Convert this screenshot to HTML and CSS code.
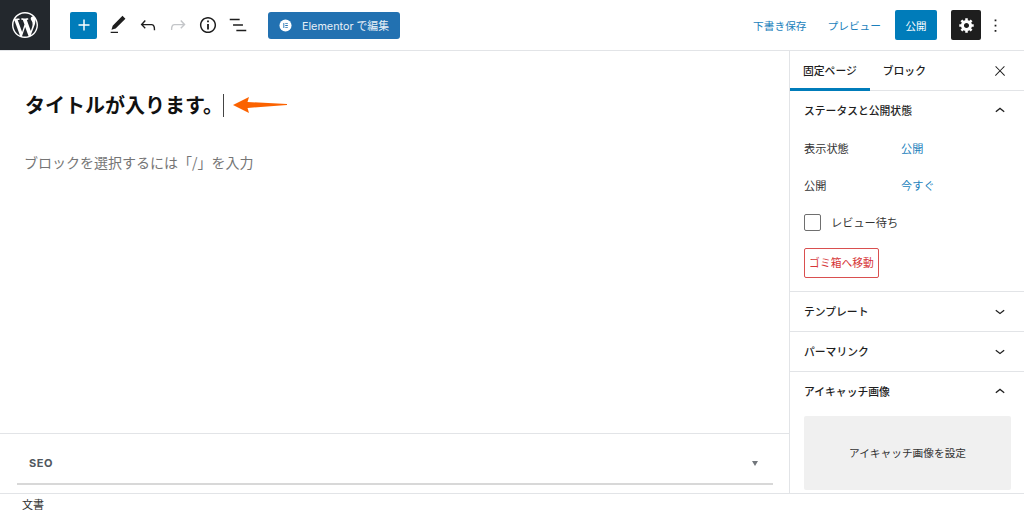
FILE: index.html
```html
<!DOCTYPE html>
<html lang="ja">
<head>
<meta charset="utf-8">
<title>固定ページを編集</title>
<link rel="stylesheet" href="styles.css">
</head>
<body>
<header class="topbar">
  <div class="wp-logo">
    <svg class="wp-svg" viewBox="0 0 20 20"><path d="M20 10c0-5.51-4.49-10-10-10C4.48 0 0 4.49 0 10c0 5.52 4.48 10 10 10 5.51 0 10-4.48 10-10zM7.78 15.37L4.37 6.22c.55-.02 1.17-.08 1.17-.08.5-.06.44-1.13-.06-1.11 0 0-1.45.11-2.37.11-.18 0-.37 0-.58-.01C4.12 2.69 6.87 1.11 10 1.11c2.33 0 4.45.87 6.05 2.34-.68-.11-1.65.39-1.65 1.58 0 .74.45 1.36.9 2.1.35.61.55 1.36.55 2.46 0 1.49-1.4 5-1.4 5l-3.03-8.37c.54-.02.82-.17.82-.17.5-.05.44-1.25-.06-1.22 0 0-1.44.12-2.38.12-.87 0-2.33-.12-2.33-.12-.5-.03-.56 1.2-.06 1.22l.92.08 1.26 3.41zM17.41 10c.24-.64.74-1.87.43-4.25.7 1.29 1.05 2.71 1.05 4.25 0 3.29-1.73 6.24-4.4 7.78.97-2.59 1.94-5.2 2.92-7.78zM6.1 18.09C3.12 16.65 1.11 13.53 1.11 10c0-1.3.23-2.48.72-3.59C3.25 10.3 4.67 14.2 6.1 18.09zm4.03-6.63l2.58 6.98c-.86.29-1.76.45-2.71.45-.79 0-1.57-.11-2.29-.33.81-2.38 1.62-4.74 2.42-7.1z"/></svg>
  </div>
  <div class="tools">
    <button class="add-btn"><svg class="ico" viewBox="0 0 24 24"><path d="M18 11.2h-5.2V6h-1.6v5.2H6v1.6h5.2V18h1.6v-5.2H18z"/></svg></button>
    <span class="tool"><svg class="ico" viewBox="0 0 24 24"><path d="M20.1 5.1L16.9 2 6.2 12.7l-1.3 4.4 4.5-1.3L20.1 5.1zM4 20.8h8v-1.5H4v1.5z"/></svg></span>
    <span class="tool"><svg class="ico" viewBox="0 0 24 24"><path d="M18.3 11.7c-.6-.6-1.4-.9-2.3-.9H6.7l2.9-3.3-1.1-1-4.5 5L8.5 16l1-1-2.7-2.7H16c.5 0 .9.2 1.3.5 1 1 1 3.4 1 4.5v.3h1.5v-.2c0-1.5 0-4.3-1.5-5.7z"/></svg></span>
    <span class="tool tool-off"><svg class="ico" viewBox="0 0 24 24"><path d="M15.6 6.5l-1.1 1 2.9 3.3H8c-.9 0-1.7.3-2.3.9-1.4 1.5-1.4 4.2-1.4 5.6v.2h1.5v-.3c0-1.1 0-3.5 1-4.5.3-.3.7-.5 1.3-.5h9.2L14.5 15l1.1 1.1 4.6-4.6-4.6-5z"/></svg></span>
    <span class="tool"><svg class="ico" viewBox="0 0 24 24"><path d="M12 3.2c-4.8 0-8.8 3.9-8.8 8.8 0 4.8 3.9 8.8 8.8 8.8 4.8 0 8.8-3.9 8.8-8.8 0-4.8-4-8.8-8.8-8.8zm0 16c-4 0-7.2-3.3-7.2-7.2C4.8 8 8 4.8 12 4.8s7.2 3.3 7.2 7.2c0 4-3.2 7.2-7.2 7.2zM11 17h2v-6h-2v6zm0-8h2V7h-2v2z"/></svg></span>
    <span class="tool"><svg class="ico" viewBox="0 0 24 24"><path d="M13.8 5.2H3v1.5h10.8V5.2zm-3.6 12v1.5H21v-1.5H10.2zm7.2-6H6.6v1.5h10.8v-1.5z"/></svg></span>
    <button class="elementor-btn">
      <svg class="el-ico" viewBox="0 0 14 14"><circle cx="7" cy="7" r="6.5" fill="#fff"/><path fill="#2271b1" d="M4.7 4.2h1v5.6h-1zM6.7 4.2h2.8v1H6.7zM6.7 6.5h2.8v1H6.7zM6.7 8.8h2.8v1H6.7z"/></svg>
      Elementor で編集
    </button>
  </div>
  <div class="actions">
    <a class="link draft">下書き保存</a>
    <a class="link preview">プレビュー</a>
    <button class="publish">公開</button>
    <button class="settings"><svg class="cog" viewBox="0 0 20 20"><path d="M18 12h-2.18c-.17.7-.44 1.35-.81 1.93l1.54 1.54-2.1 2.1-1.54-1.54c-.58.36-1.23.63-1.91.79V19H8v-2.18c-.68-.16-1.33-.43-1.91-.79l-1.54 1.54-2.12-2.12 1.54-1.54c-.36-.58-.63-1.23-.79-1.91H1V9.03h2.17c.16-.7.44-1.35.8-1.94L2.43 5.55l2.1-2.1 1.54 1.54c.58-.37 1.24-.64 1.93-.81V2h3v2.18c.68.16 1.33.43 1.91.79l1.54-1.54 2.12 2.12-1.54 1.54c.36.59.64 1.24.8 1.94H18V12zm-8.5 1.5c1.66 0 3-1.34 3-3s-1.34-3-3-3-3 1.34-3 3 1.34 3 3 3z" transform="translate(.5 -.5)"/></svg></button>
    <span class="more"><svg class="ico" viewBox="0 0 24 24"><path d="M13 19h-2v-2h2v2zm0-6h-2v-2h2v2zm0-6h-2V5h2v2z"/></svg></span>
  </div>
</header>

<div class="workspace">
  <main class="editor">
    <div class="canvas">
      <div class="title-row">
        <h1 class="title">タイトルが入ります。</h1>
        <span class="caret"></span>
        <svg class="arrow" viewBox="0 0 54 16"><path d="M0 8L16 0L14.500 5L54 7L54 8L14.500 11L16 16z"/></svg>
      </div>
      <p class="placeholder">ブロックを選択するには「/」を入力</p>
    </div>
    <section class="metabox">
      <div class="metabox-inner">
        <span class="seo">SEO</span>
        <span class="tri"></span>
      </div>
    </section>
  </main>

  <aside class="sidebar">
    <div class="tabs">
      <span class="tab tab-on">固定ページ</span>
      <span class="tab">ブロック</span>
      <svg class="ico close" viewBox="0 0 24 24"><path d="M13 11.800l6.100-6.300-1-1-6.100 6.200-6.100-6.200-1 1 6.100 6.300-6.500 6.700 1 1 6.500-6.600 6.500 6.600 1-1z"/></svg>
    </div>

    <section class="panel panel-open">
      <div class="panel-head">
        <span>ステータスと公開状態</span>
        <svg class="chev" viewBox="0 0 24 24"><path d="M6.500 13.400L12 9l5.500 4.400-.9 1.200L12 11l-4.500 3.600z"/></svg>
      </div>
      <div class="status-row"><span class="status-label">表示状態</span><a class="status-value">公開</a></div>
      <div class="status-row"><span class="status-label">公開</span><a class="status-value">今すぐ</a></div>
      <label class="check-row"><span class="check"></span><span class="check-text">レビュー待ち</span></label>
      <button class="trash">ゴミ箱へ移動</button>
    </section>

    <section class="panel">
      <div class="panel-head">
        <span>テンプレート</span>
        <svg class="chev" viewBox="0 0 24 24"><path d="M17.500 11.600L12 16l-5.500-4.400.9-1.200L12 14l4.500-3.600z"/></svg>
      </div>
    </section>
    <section class="panel">
      <div class="panel-head">
        <span>パーマリンク</span>
        <svg class="chev" viewBox="0 0 24 24"><path d="M17.500 11.600L12 16l-5.500-4.400.9-1.200L12 14l4.500-3.600z"/></svg>
      </div>
    </section>
    <section class="panel panel-last">
      <div class="panel-head">
        <span>アイキャッチ画像</span>
        <svg class="chev" viewBox="0 0 24 24"><path d="M6.500 13.400L12 9l5.500 4.400-.9 1.200L12 11l-4.500 3.600z"/></svg>
      </div>
      <div class="thumb">アイキャッチ画像を設定</div>
    </section>
  </aside>
</div>

<footer class="footer">文書</footer>
</body>
</html>
```

FILE: styles.css
```css
* { box-sizing: border-box; }
html, body { height: 100%; }
body {
  margin: 0;
  height: 514px;
  overflow: hidden;
  display: flex;
  flex-direction: column;
  background: #fff;
  color: #1e1e1e;
  font-family: "Noto Sans CJK JP", Inter, sans-serif;
  font-size: 11px;
}
button { font-family: inherit; border: 0; padding: 0; margin: 0; }
svg { display: block; }

.topbar {
  flex: none;
  height: 51px;
  display: flex;
  align-items: flex-start;
  border-bottom: 1px solid #e2e4e7;
}
.wp-logo {
  width: 50px;
  height: 50px;
  background: #23282d;
  display: flex;
  align-items: center;
  justify-content: center;
}
.wp-svg { width: 26px; height: 26px; fill: #fff; }
.ico { width: 24px; height: 24px; fill: #1e1e1e; }

.tools {
  display: flex;
  align-items: center;
  height: 50px;
  padding-left: 20px;
}
.add-btn {
  width: 27px;
  height: 27px;
  background: #007cba;
  border-radius: 2px;
  display: flex;
  align-items: center;
  justify-content: center;
  margin-right: 6px;
}
.add-btn .ico { fill: #fff; width: 22px; height: 22px; }
.tool {
  width: 30px;
  display: flex;
  justify-content: center;
}
.tool .ico { width: 22px; height: 22px; }
.tool-off .ico { fill: #c4c6c9; }
.elementor-btn {
  margin-left: 15px;
  width: 132px;
  height: 27px;
  background: #2271b1;
  color: #e8f0f7;
  border-radius: 3px;
  display: flex;
  align-items: center;
  gap: 10px;
  padding-left: 11px;
  font-size: 10.800px;
  font-family: Inter, "Noto Sans CJK JP", sans-serif;
  white-space: nowrap;
}
.el-ico { width: 13px; height: 13px; flex: none; }

.actions {
  margin-left: auto;
  margin-right: 15px;
  height: 50px;
  display: flex;
  align-items: center;
  color: #007cba;
}
.link { color: #1b7fbc; font-size: 10.700px; white-space: nowrap; }
.draft { margin-right: 21px; }
.preview { margin-right: 14px; }
.publish {
  width: 42px;
  height: 30px;
  background: #007cba;
  color: #fff;
  border-radius: 2px;
  font-size: 10.500px;
  margin-right: 14px;
}
.settings {
  width: 30px;
  height: 30px;
  background: #1e1e1e;
  border-radius: 2px;
  display: flex;
  align-items: center;
  justify-content: center;
}
.cog { width: 17px; height: 17px; fill: #fff; }
.more { width: 28px; display: flex; justify-content: center; }
.more .ico { width: 21px; height: 21px; }

.workspace { flex: 1; display: flex; min-height: 0; }

.editor {
  width: 790px;
  flex: none;
  display: flex;
  flex-direction: column;
  border-right: 1px solid #e2e4e7;
}
.canvas { flex: 1; padding: 42px 25px 0; }
.title-row { display: flex; align-items: center; height: 24px; }
.title {
  margin: 0;
  font-size: 20px;
  font-weight: 700;
  line-height: 24px;
  color: #111;
  white-space: nowrap;
  width: 198px;
}
.caret { width: 1px; height: 23px; background: #444; flex: none; }
.arrow { width: 54px; height: 16px; fill: #fb6200; margin-left: 9px; flex: none; }
.placeholder {
  margin: 35px 0 0 -1px;
  font-size: 14px;
  line-height: 20px;
  color: #757575;
  white-space: nowrap;
}

.metabox {
  flex: none;
  height: 60px;
  border-top: 1px solid #e2e4e7;
  padding: 0 16px 8px 17px;
}
.metabox-inner {
  height: 51px;
  border-bottom: 2px solid #d8d8d8;
  display: flex;
  align-items: center;
  justify-content: space-between;
  padding: 9px 15px 0 12px;
}
.seo {
  font-family: Inter, sans-serif;
  font-size: 11px;
  font-weight: 700;
  letter-spacing: .6px;
  color: #50575e;
}
.tri {
  width: 0;
  height: 0;
  border-left: 3.500px solid transparent;
  border-right: 3.500px solid transparent;
  border-top: 5px solid #72777c;
}

.sidebar { flex: 1; min-width: 0; overflow: hidden; }
.tabs {
  height: 40px;
  display: flex;
  align-items: center;
  border-bottom: 1px solid #e2e4e7;
}
.tab {
  height: 40px;
  display: flex;
  align-items: center;
  padding: 0 13px 2px;
  font-size: 10.800px;
  font-weight: 500;
  color: #1e1e1e;
  white-space: nowrap;
}
.tab-on { box-shadow: inset 0 -3px 0 #007cba; }
.close { width: 16px; height: 16px; margin-left: auto; margin-right: 16px; }

.panel { border-bottom: 1px solid #e2e4e7; padding: 0 13px 0 14px; }
.panel-head {
  height: 39px;
  padding-bottom: 2px;
  display: flex;
  align-items: center;
  justify-content: space-between;
  font-size: 10.800px;
  font-weight: 500;
  color: #1e1e1e;
  white-space: nowrap;
}
.chev { width: 20px; height: 20px; fill: #1e1e1e; flex: none; margin-right: 1px; }
.panel-open { height: 201px; }
.status-row {
  display: flex;
  align-items: center;
  height: 37px;
  padding-bottom: 1px;
  font-size: 11.200px;
}
.status-label { width: 97px; color: #333; }
.status-value { color: #1b7fbc; }
.check-row {
  display: flex;
  align-items: center;
  gap: 10px;
  height: 37px;
  font-size: 11.200px;
  color: #333;
}
.check-text { padding-bottom: 2px; }
.check {
  width: 17px;
  height: 17px;
  border: 1px solid #6f6f6f;
  border-radius: 2px;
  flex: none;
}
.trash {
  display: block;
  margin-top: 7px;
  width: 75px;
  height: 30px;
  padding-bottom: 2px;
  background: #fff;
  border: 1px solid #d94f4f;
  border-radius: 2px;
  color: #d63638;
  font-size: 10.800px;
  white-space: nowrap;
}
.panel-last { height: 200px; border-bottom: 0; }
.thumb {
  margin: 5px 0 0;
  height: 74px;
  background: #f0f0f0;
  border-radius: 2px;
  display: flex;
  align-items: center;
  justify-content: center;
  padding-bottom: 2px;
  font-size: 10.700px;
  color: #333;
}

.footer {
  flex: none;
  height: 21px;
  border-top: 1px solid #e2e4e7;
  background: #fff;
  padding-left: 22px;
  font-size: 11px;
  line-height: 20px;
  color: #333;
}
```
